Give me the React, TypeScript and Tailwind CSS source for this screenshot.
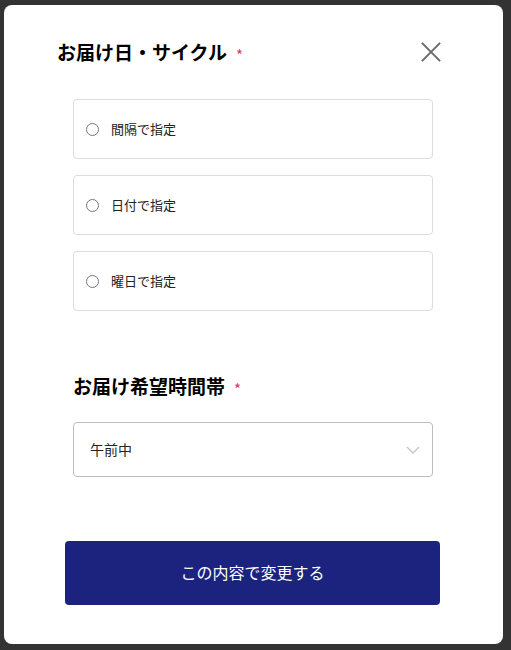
import React from "react";

const font = { fontFamily: '"Noto Sans CJK JP", "Noto Sans", sans-serif' };

function RadioCard({ label }: { label: string }) {
  return (
    <label className="flex h-[60px] w-[360px] items-center rounded-[4px] border border-[#dcdcdc] bg-white pl-[12px]">
      <span className="block h-[13px] w-[13px] rounded-full border border-[#767676] bg-white" />
      <span className="mb-[2px] ml-[12px] text-[13px] leading-none text-[#222]">{label}</span>
    </label>
  );
}

export default function App() {
  return (
    <div className="relative h-[650px] w-[511px] overflow-hidden bg-[#333333]" style={font}>
      <div className="absolute left-[4px] top-[5px] flex h-[639px] w-[499px] flex-col rounded-[8px] bg-white">
        <div className="flex items-center pl-[53px] pr-[62px] pt-[32px]">
          <h2 className="text-[19px] font-bold leading-[30px] text-black">お届け日・サイクル</h2>
          <span className="ml-[9px] mt-[5px] text-[15px] leading-none text-[#e2336b]">*</span>
          <button className="ml-auto flex h-[20px] w-[20px] items-center justify-center">
            <svg width="22" height="22" viewBox="0 0 22 22">
              <path d="M1 1 L21 21 M21 1 L1 21" stroke="#6b6b6b" strokeWidth="2.2" />
            </svg>
          </button>
        </div>
        <div className="ml-[69px] mt-[32px] flex flex-col gap-[16px]">
          <RadioCard label="間隔で指定" />
          <RadioCard label="日付で指定" />
          <RadioCard label="曜日で指定" />
        </div>
        <div className="ml-[69px] mt-[61px] flex items-center">
          <h3 className="text-[19px] font-bold leading-[28px] text-black">お届け希望時間帯</h3>
          <span className="ml-[9px] mt-[5px] text-[15px] leading-none text-[#e2336b]">*</span>
        </div>
        <div className="ml-[69px] mt-[22px] flex h-[55px] w-[360px] items-center rounded-[4px] border border-[#bdbdbd] pl-[16px] pr-[12px]">
          <span className="mb-[2px] text-[14px] leading-none text-[#222]">午前中</span>
          <svg className="ml-auto" width="14" height="8" viewBox="0 0 14 8">
            <path d="M1 1 L7 7 L13 1" fill="none" stroke="#c4c4c4" strokeWidth="1.3" />
          </svg>
        </div>
        <button className="ml-[61px] mt-[64px] flex h-[64px] w-[375px] items-center justify-center rounded-[4px] bg-[#1b237e] pb-[2px] text-[16px] text-white">
          この内容で変更する
        </button>
      </div>
    </div>
  );
}
